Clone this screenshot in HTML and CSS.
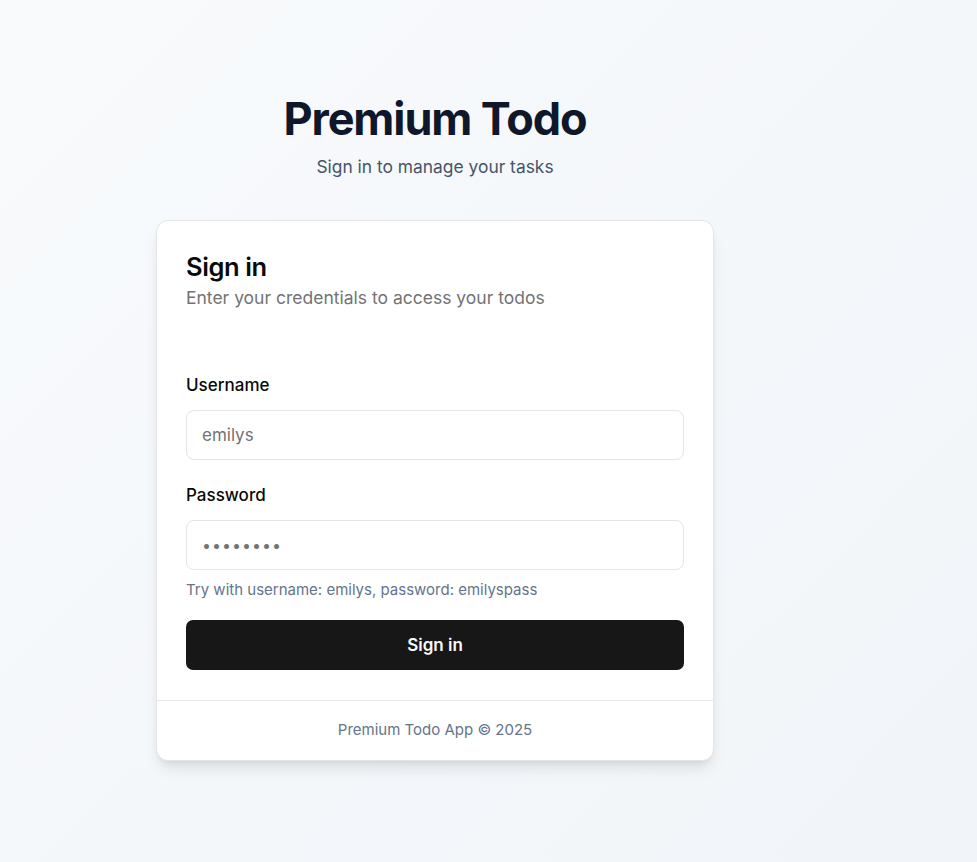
FILE: index.html
```html
<!DOCTYPE html>
<html lang="en">
<head>
<meta charset="utf-8">
<title>Premium Todo</title>
<link rel="stylesheet" href="styles.css">
</head>
<body>
<div class="page">
  <header class="hero">
    <h1 class="title">Premium Todo</h1>
    <p class="subtitle">Sign in to manage your tasks</p>
  </header>
  <div class="card">
    <div class="card-header">
      <h2 class="card-title">Sign in</h2>
      <p class="card-desc">Enter your credentials to access your todos</p>
    </div>
    <form class="card-body">
      <div class="field">
        <label class="label" for="u">Username</label>
        <input class="input" id="u" type="text" placeholder="emilys">
      </div>
      <div class="field field-pass">
        <label class="label" for="p">Password</label>
        <input class="input" id="p" type="password" placeholder="••••••••">
        <p class="hint">Try with username: emilys, password: emilyspass</p>
      </div>
      <button class="btn" type="button">Sign in</button>
    </form>
    <div class="card-footer">Premium Todo App © 2025</div>
  </div>
</div>
</body>
</html>
```
FILE: styles.css
```css
* { box-sizing: border-box; }
html, body { margin: 0; padding: 0; }
body {
  min-height: 862px;
  font-family: Inter, "Noto Sans", sans-serif;
  background: linear-gradient(135deg, #f8fafc 0%, #f1f5f9 100%);
  color: #0a0a0a;
}
.page {
  width: 870px;
  display: flex;
  flex-direction: column;
  align-items: center;
  padding-top: 95px;
}
.hero { text-align: center; }
.title {
  margin: 0;
  font-size: 45px;
  line-height: 48px;
  font-weight: 700;
  letter-spacing: -1.1px;
  color: #0f172a;
}
.subtitle {
  margin: 10px 0 0;
  font-size: 17.4px;
  line-height: 28px;
  color: #475569;
}
.card {
  margin-top: 39px;
  width: 558px;
  background: #fff;
  border: 1px solid #e5e5e5;
  border-radius: 12px;
  box-shadow: 0 10px 15px -3px rgba(0,0,0,0.1), 0 4px 6px -4px rgba(0,0,0,0.1);
}
.card-header { padding: 29px 29px 0; }
.card-title {
  margin: 0;
  font-size: 25.5px;
  line-height: 34px;
  font-weight: 600;
  letter-spacing: -0.4px;
  color: #0a0a0a;
}
.card-desc {
  margin: 0;
  font-size: 17.5px;
  line-height: 28px;
  color: #737373;
}
.card-body {
  padding: 60px 29px 30px;
  margin: 0;
  display: flex;
  flex-direction: column;
}
.field { display: flex; flex-direction: column; margin-bottom: 22px; }
.field-pass { margin-bottom: 19px; }
.label {
  font-size: 17px;
  line-height: 26px;
  font-weight: 500;
  color: #0a0a0a;
  margin-bottom: 12px;
}
.input {
  height: 50px;
  width: 100%;
  border: 1px solid #e5e5e5;
  border-radius: 8px;
  padding: 0 15px;
  font-family: inherit;
  font-size: 17px;
  color: #0a0a0a;
  background: #fff;
  outline: none;
}
.input::placeholder { color: #737373; }
#p::placeholder { letter-spacing: 1px; font-size: 16px; }
.hint {
  margin: 9px 0 0;
  font-size: 15px;
  line-height: 22px;
  color: #64748b;
}
.btn {
  height: 50px;
  width: 100%;
  border: none;
  border-radius: 7px;
  background: #171717;
  color: #fafafa;
  font-family: inherit;
  font-size: 17px;
  font-weight: 600;
}
.card-footer {
  border-top: 1px solid #e5e7eb;
  padding: 18px 0 19px;
  text-align: center;
  font-size: 15px;
  line-height: 22px;
  color: #64748b;
}
```
